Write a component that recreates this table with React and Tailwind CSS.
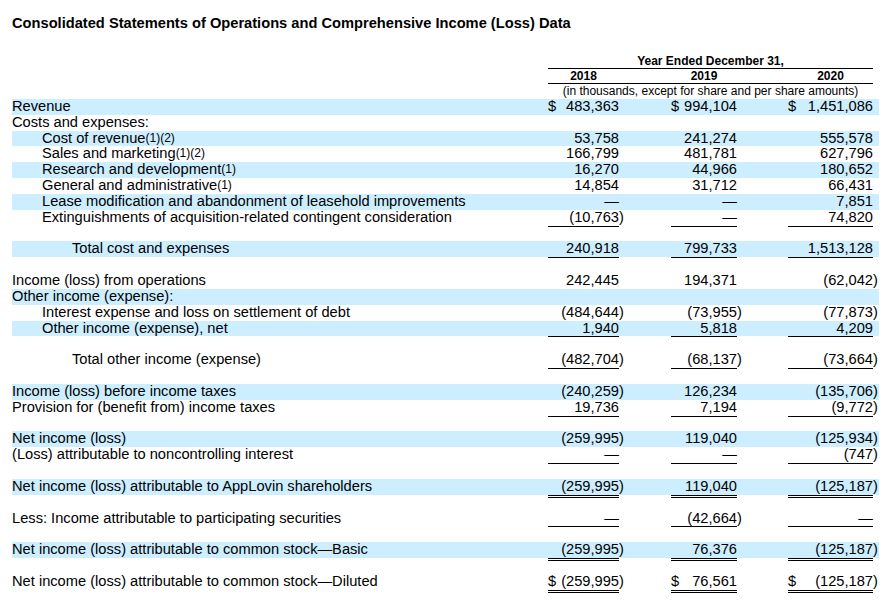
import React from "react";

const rows = [
  { label: "Revenue", band: true, vals: ["483,363", "994,104", "1,451,086"], dollar: true },
  { label: "Costs and expenses:" },
  { label: "Cost of revenue", sup: "(1)(2)", indent: 1, band: true, vals: ["53,758", "241,274", "555,578"] },
  { label: "Sales and marketing", sup: "(1)(2)", indent: 1, vals: ["166,799", "481,781", "627,796"] },
  { label: "Research and development", sup: "(1)", indent: 1, band: true, vals: ["16,270", "44,966", "180,652"] },
  { label: "General and administrative", sup: "(1)", indent: 1, vals: ["14,854", "31,712", "66,431"] },
  { label: "Lease modification and abandonment of leasehold improvements", indent: 1, band: true, vals: ["—", "—", "7,851"] },
  { label: "Extinguishments of acquisition-related contingent consideration", indent: 1, vals: ["(10,763)", "—", "74,820"], line: "single" },
  {},
  { label: "Total cost and expenses", indent: 2, band: true, vals: ["240,918", "799,733", "1,513,128"], line: "single" },
  {},
  { label: "Income (loss) from operations", vals: ["242,445", "194,371", "(62,042)"] },
  { label: "Other income (expense):", band: true },
  { label: "Interest expense and loss on settlement of debt", indent: 1, vals: ["(484,644)", "(73,955)", "(77,873)"] },
  { label: "Other income (expense), net", indent: 1, band: true, vals: ["1,940", "5,818", "4,209"], line: "single" },
  {},
  { label: "Total other income (expense)", indent: 2, vals: ["(482,704)", "(68,137)", "(73,664)"], line: "single" },
  {},
  { label: "Income (loss) before income taxes", band: true, vals: ["(240,259)", "126,234", "(135,706)"] },
  { label: "Provision for (benefit from) income taxes", vals: ["19,736", "7,194", "(9,772)"], line: "single" },
  {},
  { label: "Net income (loss)", band: true, vals: ["(259,995)", "119,040", "(125,934)"] },
  { label: "(Loss) attributable to noncontrolling interest", vals: ["—", "—", "(747)"], line: "single" },
  {},
  { label: "Net income (loss) attributable to AppLovin shareholders", band: true, vals: ["(259,995)", "119,040", "(125,187)"], line: "double" },
  {},
  { label: "Less: Income attributable to participating securities", vals: ["—", "(42,664)", "—"], line: "single" },
  {},
  { label: "Net income (loss) attributable to common stock—Basic", band: true, vals: ["(259,995)", "76,376", "(125,187)"], line: "double" },
  {},
  { label: "Net income (loss) attributable to common stock—Diluted", vals: ["(259,995)", "76,561", "(125,187)"], line: "double", dollar: true },
];

function Cell({ value, width, line, dollar }) {
  const neg = value && value.startsWith("(");
  const num = neg ? value.slice(0, -1) : value;
  return (
    <div className="flex">
      <div
        className={`${width} flex justify-between ${
          line === "single"
            ? "border-b border-black"
            : line === "double"
            ? "border-b-[3px] border-double border-black"
            : ""
        }`}
      >
        <span>{dollar ? "$" : ""}</span>
        <span>{num}</span>
      </div>
      <span className="w-[5px]">{neg ? ")" : ""}</span>
    </div>
  );
}

export default function App() {
  return (
    <div className="w-[885px] h-[604px] bg-white text-black pl-[12px] pt-[15px] font-['Liberation_Sans',Arial,sans-serif] overflow-hidden">
      <div className="text-[14.67px] leading-[17px] font-bold">
        Consolidated Statements of Operations and Comprehensive Income (Loss) Data
      </div>

      {/* column headings */}
      <div className="mt-[21px] ml-[536px] w-[325px] text-[12px]">
        <div className="h-[16px] leading-[16px] text-center font-bold border-b border-black">
          Year Ended December 31,
        </div>
        <div className="flex h-[15px] leading-[15px] font-bold border-b border-black">
          <div className="w-[71px] text-center">2018</div>
          <div className="w-[52px]" />
          <div className="w-[66px] text-center">2019</div>
          <div className="w-[51px]" />
          <div className="w-[85px] text-center">2020</div>
        </div>
        <div className="h-[15px] leading-[15px] text-center">
          (in thousands, except for share and per share amounts)
        </div>
      </div>

      {/* statement rows */}
      <div className="w-[867px] text-[14.67px]">
        {rows.map((r, i) => (
          <div
            key={i}
            className={`flex items-start h-[15.83px] leading-[15.83px] ${r.band ? "bg-[#cceeff]" : ""}`}
          >
            <div
              className={`w-[536px] whitespace-nowrap ${
                r.indent === 1 ? "pl-[30px]" : r.indent === 2 ? "pl-[60px]" : ""
              }`}
            >
              {r.label}
              {r.sup && <span className="text-[12px] align-[1px]">{r.sup}</span>}
            </div>
            {r.vals && (
              <>
                <Cell value={r.vals[0]} width="w-[71px]" line={r.line} dollar={r.dollar} />
                <div className="w-[47px]" />
                <Cell value={r.vals[1]} width="w-[66px]" line={r.line} dollar={r.dollar} />
                <div className="w-[46px]" />
                <Cell value={r.vals[2]} width="w-[85px]" line={r.line} dollar={r.dollar} />
              </>
            )}
          </div>
        ))}
      </div>
    </div>
  );
}
